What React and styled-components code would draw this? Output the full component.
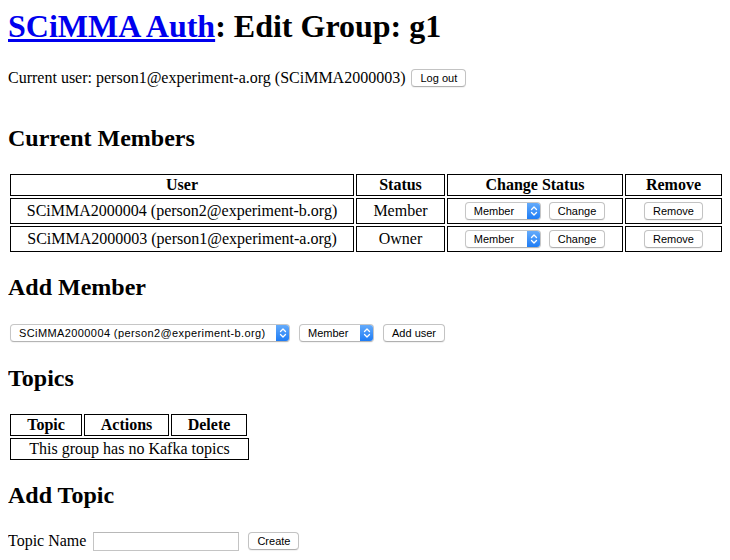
import React from "react";
import styled, { createGlobalStyle } from "styled-components";

const members = [
  { user: "SCiMMA2000004 (person2@experiment-b.org)", status: "Member" },
  { user: "SCiMMA2000003 (person1@experiment-a.org)", status: "Owner" }
];

const GlobalStyle = createGlobalStyle`
  html, body {
    background: #fff;
  }
  body {
    margin: 8px;
    font-family: "Liberation Serif", "Times New Roman", serif;
    font-size: 16px;
    color: #000;
  }
`;

const Title = styled.h1`
  margin: 0 0 23px;
  font-size: 32px;
  font-weight: bold;
  line-height: normal;
  a {
    color: #0000ee;
    text-decoration: underline;
  }
`;

const UserLine = styled.div`
  display: flex;
  align-items: center;
  gap: 6px;
  height: 19px;
  margin-bottom: 38px;
`;

const SectionHeading = styled.h2`
  margin: 20px 0 20.4px;
  font-size: 24px;
  font-weight: bold;
  line-height: normal;
`;

const Table = styled.table`
  border-collapse: separate;
  border-spacing: 2px;
  margin: 0;
  width: ${props => (props.$width ? `${props.$width}px` : "auto")};
  th,
  td {
    box-sizing: border-box;
    border: 1px solid #000;
    padding: 1px;
    text-align: center;
    vertical-align: middle;
  }
  th {
    font-weight: bold;
  }
`;

// empty trailing column, the colspan of the body row reaches into it
const GhostCell = styled.th`
  && {
    width: 0;
    padding: 0;
    border: 0;
  }
`;

const BodyCell = styled.td`
  height: ${props => props.$height || 26}px;
`;

const CellControls = styled.div`
  display: flex;
  justify-content: center;
  align-items: center;
  gap: 8px;
`;

const FormRow = styled.div`
  display: flex;
  align-items: center;
  gap: ${props => props.$gap || 9}px;
  height: 23px;
  padding-left: ${props => props.$indent || 0}px;
`;

const Button = styled.button`
  box-sizing: border-box;
  height: 18px;
  padding: 0 8px;
  margin: 0;
  font-family: "Liberation Sans", Arial, sans-serif;
  font-size: 11px;
  color: #000;
  background: #fff;
  border: 1px solid #c3c3c3;
  border-bottom-color: #b0b0b0;
  border-radius: 4px;
  box-shadow: 0 1px 1px rgba(0, 0, 0, 0.06);
  line-height: 16px;
  white-space: nowrap;
`;

const SelectBox = styled.span`
  box-sizing: border-box;
  display: inline-flex;
  align-items: stretch;
  width: ${props => props.$width}px;
  height: 18px;
  border: 1px solid #c6c6c6;
  border-bottom-color: #b4b4b4;
  border-radius: 4px;
  background: #fff;
  overflow: hidden;
  box-shadow: 0 1px 1px rgba(0, 0, 0, 0.05);
`;

const NativeSelect = styled.select`
  flex: 1;
  min-width: 0;
  appearance: none;
  -webkit-appearance: none;
  border: 0;
  margin: 0;
  padding: 0 0 0 8px;
  background: transparent;
  font-family: "Liberation Sans", Arial, sans-serif;
  font-size: 11px;
  letter-spacing: ${props => props.$spacing || 0}px;
  color: #000;
  outline: none;
`;

const Spinner = styled.span`
  display: flex;
  align-items: center;
  justify-content: center;
  width: 14px;
  margin: -1px -1px -1px 0;
  background: linear-gradient(#69aefb, #1979f5);
  border-radius: 0 4px 4px 0;
`;

const TextInput = styled.input`
  box-sizing: border-box;
  width: 146px;
  height: 19px;
  margin: 0;
  padding: 0 3px;
  border: 1px solid #c4c4c4;
  border-top-color: #b8b8b8;
  font-family: "Liberation Sans", Arial, sans-serif;
  font-size: 11px;
  background: #fff;
`;

const Label = styled.span`
  line-height: 18px;
`;

function Select({ width, value, options, spacing }) {
  return (
    <SelectBox $width={width}>
      <NativeSelect defaultValue={value} $spacing={spacing}>
        {options.map(option => (
          <option key={option}>{option}</option>
        ))}
      </NativeSelect>
      <Spinner>
        <svg width="8" height="12" viewBox="0 0 8 12">
          <path
            d="M1.5 4.5 L4 2 L6.5 4.5 M1.5 7.5 L4 10 L6.5 7.5"
            fill="none"
            stroke="#fff"
            strokeWidth="1.3"
            strokeLinecap="round"
            strokeLinejoin="round"
          />
        </svg>
      </Spinner>
    </SelectBox>
  );
}

const statusOptions = ["Member", "Owner"];

export default function App() {
  return (
    <>
      <GlobalStyle />
      <Title>
        <a href="#top">SCiMMA Auth</a>: Edit Group: g1
      </Title>
      <UserLine>
        <span>Current user: person1@experiment-a.org (SCiMMA2000003)</span>
        <Button>Log out</Button>
      </UserLine>

      <SectionHeading>Current Members</SectionHeading>
      <Table $width={716}>
        <thead>
          <tr>
            <th style={{ width: 344 }}>User</th>
            <th style={{ width: 89 }}>Status</th>
            <th style={{ width: 176 }}>Change Status</th>
            <th style={{ width: 97 }}>Remove</th>
          </tr>
        </thead>
        <tbody>
          {members.map(member => (
            <tr key={member.user}>
              <BodyCell>{member.user}</BodyCell>
              <BodyCell>{member.status}</BodyCell>
              <BodyCell>
                <CellControls>
                  <Select width={76} value="Member" options={statusOptions} />
                  <Button>Change</Button>
                </CellControls>
              </BodyCell>
              <BodyCell>
                <CellControls>
                  <Button>Remove</Button>
                </CellControls>
              </BodyCell>
            </tr>
          ))}
        </tbody>
      </Table>

      <SectionHeading>Add Member</SectionHeading>
      <FormRow $indent={2}>
        <Select
          width={280}
          value="SCiMMA2000004 (person2@experiment-b.org)"
          options={["SCiMMA2000004 (person2@experiment-b.org)"]}
          spacing={0.4}
        />
        <Select width={75} value="Member" options={statusOptions} />
        <Button>Add user</Button>
      </FormRow>

      <SectionHeading>Topics</SectionHeading>
      <Table>
        <thead>
          <tr>
            <th style={{ width: 72 }}>Topic</th>
            <th style={{ width: 85 }}>Actions</th>
            <th style={{ width: 76 }}>Delete</th>
            <GhostCell />
          </tr>
        </thead>
        <tbody>
          <tr>
            <BodyCell colSpan={4} $height={22}>
              This group has no Kafka topics
            </BodyCell>
          </tr>
        </tbody>
      </Table>

      <SectionHeading>Add Topic</SectionHeading>
      <FormRow $gap={7}>
        <Label>Topic Name</Label>
        <TextInput type="text" />
        <Button style={{ marginLeft: 2 }}>Create</Button>
      </FormRow>
    </>
  );
}
